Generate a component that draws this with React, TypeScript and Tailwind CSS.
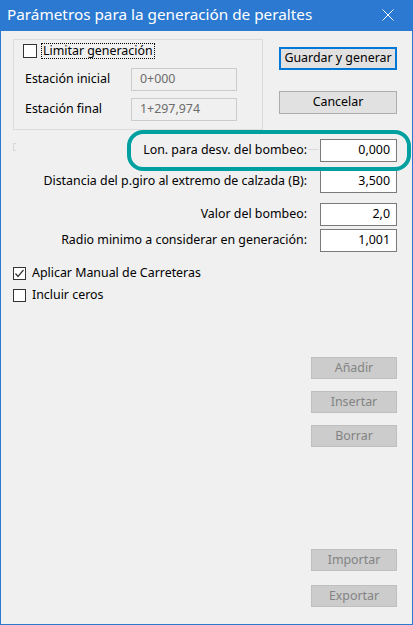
export default function App() {
	const font = { fontFamily: '"Noto Sans", "Open Sans", sans-serif' };

	const fields = [
		{ label: "Lon. para desv. del bombeo:", value: "0,000", mt: "mt-[9px]", line: true },
		{ label: "Distancia del p.giro al extremo de calzada (B):", value: "3,500", mt: "mt-[8px]", line: false },
		{ label: "Valor del bombeo:", value: "2,0", mt: "mt-[10px]", line: false },
		{ label: "Radio minimo a considerar en generación:", value: "1,001", mt: "mt-[3px]", line: false }
	];

	return (
		<div
			className="flex h-[625px] w-[413px] flex-col border-x border-b border-[#2b79d0] bg-[#f0f0f0] text-[12.4px] leading-none text-black"
			style={font}
		>
			{/* title bar */}
			<div className="flex h-[31px] shrink-0 items-center justify-between bg-[#2b79d0] pl-[6px] pr-[18px] text-[15.3px] text-white">
				<span className="-mt-[1px]">Parámetros para la generación de peraltes</span>
				<svg width="12" height="12" viewBox="0 0 12 12" className="-mt-[1px]">
					<path d="M0.5 0.5 L11.5 11.5 M11.5 0.5 L0.5 11.5" stroke="white" strokeWidth="1" fill="none" />
				</svg>
			</div>

			<div className="relative flex flex-1 flex-col">
				{/* top section */}
				<div className="mt-[8px] flex">
					<div className="ml-[12px] flex h-[91px] w-[250px] flex-col border border-[#dcdcdc]">
						<div className="flex items-center pl-[9px] pt-[3px]">
							<div className="h-[14px] w-[14px] border border-[#333333] bg-white" />
							<span className="ml-[4px] flex h-[16px] items-center border border-dotted border-black px-[1px]">
								Limitar generación
							</span>
						</div>
						<div className="mt-[9px] flex items-center pl-[11px]">
							<span className="w-[106px]">Estación inicial</span>
							<div className="flex h-[23px] w-[106px] items-center border border-[#cccccc] bg-[#f0f0f0] px-[8px] text-[#6d6d6d]">
								0+000
							</div>
						</div>
						<div className="mt-[7px] flex items-center pl-[11px]">
							<span className="w-[106px]">Estación final</span>
							<div className="flex h-[23px] w-[106px] items-center border border-[#cccccc] bg-[#f0f0f0] px-[8px] text-[#6d6d6d]">
								1+297,974
							</div>
						</div>
					</div>
					<div className="ml-[16px] flex w-[118px] flex-col">
						<button className="mt-[8px] flex h-[23px] items-center justify-center border-2 border-[#0078d7] bg-[#e1e1e1]">
							Guardar y generar
						</button>
						<button className="mt-[21px] flex h-[23px] items-center justify-center border border-[#adadad] bg-[#e1e1e1]">
							Cancelar
						</button>
					</div>
				</div>

				{/* fields */}
				{fields.map((f, i) => (
					<div key={i} className={`${f.mt} flex items-center pr-[15px]`}>
						{i === 0 && <div className="ml-[12px] mt-[-8px] h-[8px] w-[3px] border-y border-l border-[#d8d8d8]" />}
						<div className="flex-1" />
						<span className="whitespace-nowrap text-right">{f.label}</span>
						<div className="flex w-[13px] items-center pl-[1px]">
							{f.line && <div className="mt-[-2px] h-px w-[11px] bg-[#dadada]" />}
						</div>
						<div className="flex h-[23px] w-[77px] items-center justify-end border border-[#7a7a7a] bg-white px-[6px]">
							{f.value}
						</div>
					</div>
				))}

				{/* checkboxes */}
				<div className="mt-[15px] flex items-center pl-[12px]">
					<div className="flex h-[13px] w-[13px] items-center justify-center border border-[#333333] bg-white">
						<svg width="11" height="11" viewBox="0 0 11 11">
							<path d="M1.5 5.5 L4 8.5 L9.5 2" stroke="#333333" strokeWidth="1.2" fill="none" />
						</svg>
					</div>
					<span className="ml-[6px]">Aplicar Manual de Carreteras</span>
				</div>
				<div className="mt-[9px] flex items-center pl-[12px]">
					<div className="h-[13px] w-[13px] border border-[#333333] bg-white" />
					<span className="ml-[6px]">Incluir ceros</span>
				</div>

				{/* disabled buttons */}
				<div className="flex flex-col items-end pr-[15px]">
					{[
						{ t: "Añadir", mt: "mt-[55px]" },
						{ t: "Insertar", mt: "mt-[12px]" },
						{ t: "Borrar", mt: "mt-[12px]" },
						{ t: "Importar", mt: "mt-[102px]" },
						{ t: "Exportar", mt: "mt-[14px]" }
					].map((b) => (
						<button
							key={b.t}
							className={`${b.mt} flex h-[22px] w-[86px] items-center justify-center border border-[#bfbfbf] bg-[#cccccc] text-[#838383]`}
						>
							{b.t}
						</button>
					))}
				</div>

				{/* highlight drawn over the first field */}
				<div className="pointer-events-none absolute left-[126px] top-[99px] h-[41px] w-[284px] rounded-[16px] border-[4px] border-[#00a0a0]" />
			</div>
		</div>
	);
}
